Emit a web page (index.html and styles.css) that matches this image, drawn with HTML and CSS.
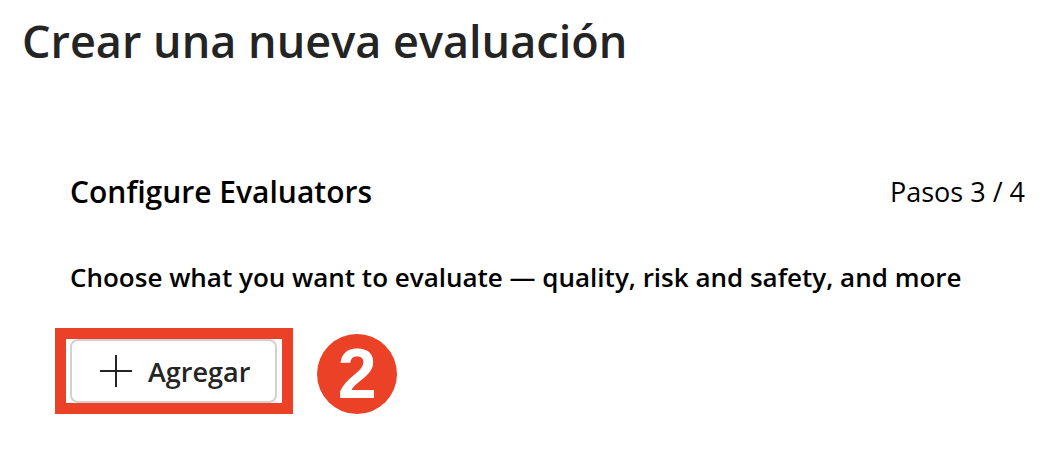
FILE: index.html
```html
<!DOCTYPE html>
<html lang="es">
<head>
<meta charset="utf-8">
<title>Crear una nueva evaluación</title>
<link rel="stylesheet" href="styles.css">
</head>
<body>
<header class="page-header"><h1 class="page-title">Crear una nueva evaluación</h1></header>
<main class="step">
  <div class="step-header">
    <h2 class="step-title">Configure Evaluators</h2>
    <span class="step-count">Pasos 3 / 4</span>
  </div>
  <p class="step-prompt">Choose what you want to evaluate — quality, risk and safety, and more</p>
  <div class="actions">
    <div class="highlight">
      <button class="add-button" type="button">
        <svg class="add-icon" viewBox="0 0 32 32" aria-hidden="true"><path d="M16 0v32M0 16h32"/></svg>
        <span>Agregar</span>
      </button>
    </div>
    <span class="marker">2</span>
  </div>
</main>
</body>
</html>
```
FILE: styles.css
```css
* { box-sizing: border-box; }
body {
  margin: 0;
  background: #fff;
  color: #000;
  font-family: "Segoe UI", "Open Sans", "Noto Sans", sans-serif;
}
h1, h2, p { margin: 0; }
.page-header { padding: 9px 22px 0; }
.page-title { color: #242424; font-size: 45px; line-height: 64px; font-weight: 600; }
.step { padding: 97px 35px 44px 70px; }
.step-header { display: flex; justify-content: space-between; align-items: center; }
.step-title { font-size: 30px; line-height: 44px; font-weight: 600; }
.step-count { font-size: 27px; line-height: 40px; }
.step-prompt { margin-top: 43px; font-size: 26px; line-height: 40px; font-weight: 600; white-space: nowrap; }
.actions { display: flex; align-items: flex-end; gap: 24px; margin: 31px 0 0 -15px; }
.highlight { padding: 11px 16px 11px 15px; background: #fff; box-shadow: inset 0 0 0 11px #eb4127; }
.add-button {
  display: flex;
  align-items: center;
  gap: 16px;
  height: 64px;
  padding: 0 25px 0 28px;
  border: 2px solid #d1d1d1;
  border-radius: 8px;
  background: #fff;
  color: #242424;
  font: inherit;
  font-size: 27px;
  font-weight: 600;
}
.add-icon { width: 32px; height: 32px; fill: none; stroke: #242424; stroke-width: 2; }
.marker {
  display: flex;
  align-items: center;
  justify-content: center;
  width: 80px;
  height: 80px;
  border-radius: 50%;
  background: #eb4127;
  color: #fff;
  font-family: "Liberation Sans", Arial, sans-serif;
  font-size: 70px;
  line-height: 80px;
  font-weight: 700;
}
```
